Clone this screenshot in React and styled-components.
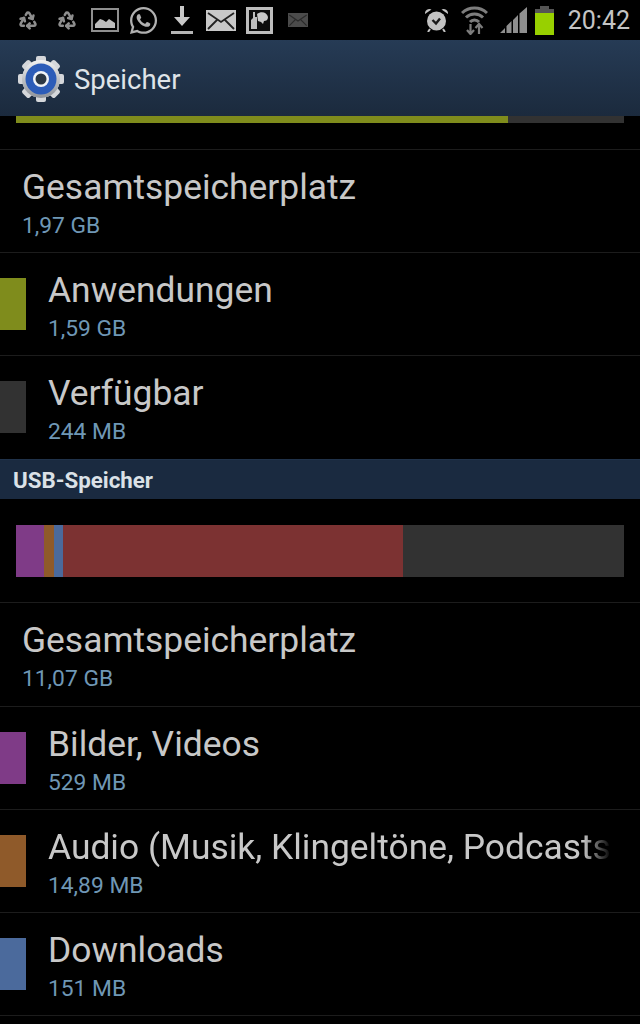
import React from "react";
import styled, { createGlobalStyle } from "styled-components";
import { Recycle } from "lucide-react";
import { FaWhatsapp } from "react-icons/fa";

const GlobalStyle = createGlobalStyle`
  html, body {
    margin: 0;
    padding: 0;
    background: #000;
  }
  body {
    font-family: Roboto, "Liberation Sans", sans-serif;
  }
`;

const Page = styled.div`
  width: 640px;
  height: 1024px;
  overflow: hidden;
  background: #000;
`;

const StatusBar = styled.div`
  height: 40px;
  display: flex;
  align-items: center;
  padding: 0 10px 0 9px;
  box-sizing: border-box;
`;

const Notifications = styled.div`
  display: flex;
  align-items: center;
  flex: 1;
`;

const SystemIcons = styled.div`
  display: flex;
  align-items: center;
`;

const IconSlot = styled.div`
  width: 38.5px;
  height: 40px;
  flex: none;
  display: flex;
  align-items: center;
  justify-content: center;
`;

const BatterySlot = styled.div`
  margin: 0 14px 0 2px;
  display: flex;
  align-items: center;
`;

const Clock = styled.span`
  font-size: 25px;
  color: #c4c4c4;
`;

const ActionBar = styled.div`
  height: 76px;
  display: flex;
  align-items: center;
  gap: 10px;
  padding-left: 18px;
  box-sizing: border-box;
  background: linear-gradient(#263b55, #1b2a3d);
`;

const ActionTitle = styled.span`
  font-size: 27.5px;
  color: #dfe4e8;
  padding-top: 3px;
`;

const Bar = styled.div`
  display: flex;
  margin: 0 16px;
  height: ${(p) => p.$height}px;
  background: #323232;
`;

const BarPart = styled.div`
  background: ${(p) => p.$color};
`;

const Row = styled.div`
  height: 102px;
  margin-bottom: ${(p) => (p.$tall ? 1 : 0)}px;
  border-top: 1px solid #1c1c1c;
  display: flex;
  align-items: center;
  overflow: hidden;
`;

const Swatch = styled.div`
  width: 26px;
  height: 52px;
  background: ${(p) => p.$color};
  flex: none;
`;

const RowText = styled.div`
  margin-left: 22px;
  padding-top: 4px;
  min-width: 0;
  white-space: nowrap;
`;

const RowTitle = styled.div`
  font-size: 35.4px;
  line-height: 46px;
  color: #c8c8c8;
  width: 563px;
  overflow: hidden;
  mask-image: ${(p) => (p.$fade ? "linear-gradient(to right, #000 95%, transparent 100%)" : "none")};
`;

const RowValue = styled.div`
  font-size: 22.8px;
  line-height: 32px;
  color: #6f97b5;
`;

const SectionHeader = styled.div`
  height: 40px;
  margin-top: 1px;
  display: flex;
  align-items: center;
  padding-left: 13px;
  background: #1a2a40;
  border-top: 1px solid #20324a;
  box-sizing: border-box;
  font-size: 22.3px;
  font-weight: 700;
  color: #dbe1e7;
`;

const BarSection = styled.div`
  padding: 26px 0 25px;
`;

const TopBarGap = styled.div`
  height: 26px;
`;

const internalRows = [
  { title: "Anwendungen", value: "1,59 GB", color: "#7f8c1c" },
  { title: "Verfügbar", value: "244 MB", color: "#323232" },
];

const usbRows = [
  { title: "Bilder, Videos", value: "529 MB", color: "#7f3b87" },
  { title: "Audio (Musik, Klingeltöne, Podcasts", value: "14,89 MB", color: "#8f5a2a", fade: true },
  { title: "Downloads", value: "151 MB", color: "#4b6a9c" },
];

const usbParts = [
  { width: 28, color: "#7f3b87" },
  { width: 10, color: "#8f5a2a" },
  { width: 9, color: "#4b6a9c" },
  { width: 340, color: "#7c3232" },
];

const Picture = () => (
  <svg width="28" height="24" viewBox="0 0 28 24">
    <rect x="1" y="1" width="26" height="22" fill="#000" stroke="#8f8f8f" strokeWidth="2" />
    <path d="M4 20v-4l5-5 3 1 3 2 3-3 6 4v5z" fill="#bdbdbd" />
  </svg>
);

const Download = () => (
  <svg width="22" height="28" viewBox="0 0 22 28">
    <path d="M9 0h4v11h6l-8 9-8-9h6z" fill="#c8c8c8" />
    <rect x="0" y="25" width="22" height="3" fill="#b5b5b5" />
  </svg>
);

const Mail = ({ dim }) => (
  <svg width={dim ? 22 : 30} height={dim ? 14 : 21} viewBox="0 0 30 21">
    <rect width="30" height="21" fill={dim ? "#4b4b4b" : "#c8c8c8"} />
    <path d="M2 3l13 9L28 3M2 19l9-9M28 19l-9-9" fill="none" stroke={dim ? "#2a2a2a" : "#222"} strokeWidth="1.800" />
  </svg>
);

const PhotoIcon = () => (
  <svg width="27" height="27" viewBox="0 0 27 27">
    <rect x="1.500" y="1.500" width="24" height="24" fill="#0c0c0c" stroke="#bdbdbd" strokeWidth="3" />
    <path d="M11 7c4-3 10-2 11 3 0 3-2 4-4 4l-1 3-2-2-3-1z" fill="#c8c8c8" />
    <path d="M7 5h2v5h2v12H5V13l2-2z" fill="#bdbdbd" />
  </svg>
);

const Alarm = () => (
  <svg width="23" height="24" viewBox="0 0 23 24">
    <circle cx="11.500" cy="13" r="9.500" fill="#c2c2c2" />
    <path d="M7.500 12l3.500 3.500 4-5" fill="none" stroke="#1a1a1a" strokeWidth="2.400" />
    <path d="M0 6a4.500 4.500 0 0 1 6.500-4.500zM23 6a4.500 4.500 0 0 0-6.500-4.500z" fill="#c2c2c2" />
    <path d="M5 21l-2 3M18 21l2 3" stroke="#c2c2c2" strokeWidth="2" />
  </svg>
);

const Wifi = () => (
  <svg width="27" height="29" viewBox="0 0 27 29" fill="none" stroke="#7d7d7d">
    <path d="M1 7a18 18 0 0 1 25 0" strokeWidth="3" />
    <path d="M5 11.500a12 12 0 0 1 17 0" strokeWidth="3" />
    <path d="M9 16a6 6 0 0 1 9 0" strokeWidth="3" />
    <path d="M9.500 18v10M6 24l3.500 4 3.500-4" strokeWidth="2.200" />
    <path d="M18 28V18M14.500 22l3.500-4 3.500 4" strokeWidth="2.200" />
  </svg>
);

const Signal = () => (
  <svg width="27" height="26" viewBox="0 0 27 26" fill="#8f8f8f">
    <path d="M0 26l5-5v5zM6.500 26v-7l5-5v12zM13 26V13l5-5v18zM19.500 26V6.500L27 0v26z" />
  </svg>
);

const Battery = () => (
  <svg width="19" height="29" viewBox="0 0 19 29">
    <rect x="5" y="0" width="9" height="3" fill="#555" />
    <rect x="0" y="3" width="19" height="4" fill="#555" />
    <rect x="0" y="7" width="19" height="22" fill="#98d000" />
  </svg>
);

const Gear = () => (
  <svg width="46" height="48" viewBox="0 0 46 48">
    <defs>
      <linearGradient id="gear" x1="0" y1="0" x2="0" y2="1">
        <stop offset="0" stopColor="#f2f2f2" />
        <stop offset="1" stopColor="#8d9299" />
      </linearGradient>
    </defs>
    <circle cx="23" cy="25" r="19" fill="#c9cccf" />
    {[0, 45, 90, 135, 180, 225, 270, 315].map((a) => (
      <rect key={a} x="18" y="2" width="10" height="9" rx="2" fill="#d5d7da" transform={`rotate(${a} 23 25)`} />
    ))}
    <circle cx="23" cy="25" r="19" fill="url(#gear)" />
    <circle cx="23" cy="25" r="15.500" fill="#2c5cb8" />
    <circle cx="23" cy="25" r="8" fill="#f0f3f7" />
    <circle cx="23" cy="25" r="5.500" fill="#2b3744" />
  </svg>
);

const StorageRow = ({ title, value, color, fade, tall }) => (
  <Row $tall={tall}>
    {color && <Swatch $color={color} />}
    <RowText>
      <RowTitle $fade={fade}>{title}</RowTitle>
      <RowValue>{value}</RowValue>
    </RowText>
  </Row>
);

export default function App() {
  return (
    <Page>
      <GlobalStyle />
      <StatusBar>
        <Notifications>
          <IconSlot><Recycle size={20} color="#8e8e8e" strokeWidth={3} /></IconSlot>
          <IconSlot><Recycle size={20} color="#8e8e8e" strokeWidth={3} /></IconSlot>
          <IconSlot><Picture /></IconSlot>
          <IconSlot><FaWhatsapp size={31} color="#b0b0b0" /></IconSlot>
          <IconSlot><Download /></IconSlot>
          <IconSlot><Mail /></IconSlot>
          <IconSlot><PhotoIcon /></IconSlot>
          <IconSlot><Mail dim /></IconSlot>
        </Notifications>
        <SystemIcons>
          <IconSlot><Alarm /></IconSlot>
          <IconSlot><Wifi /></IconSlot>
          <IconSlot><Signal /></IconSlot>
          <BatterySlot><Battery /></BatterySlot>
          <Clock>20:42</Clock>
        </SystemIcons>
      </StatusBar>
      <ActionBar>
        <Gear />
        <ActionTitle>Speicher</ActionTitle>
      </ActionBar>
      <Bar $height={7}>
        <BarPart $color="#7f8c1c" style={{ width: 492 }} />
      </Bar>
      <TopBarGap />
      <StorageRow title="Gesamtspeicherplatz" value="1,97 GB" />
      {internalRows.map((r) => (
        <StorageRow key={r.title} {...r} />
      ))}
      <SectionHeader>USB-Speicher</SectionHeader>
      <BarSection>
        <Bar $height={52}>
          {usbParts.map((p) => (
            <BarPart key={p.color} $color={p.color} style={{ width: p.width }} />
          ))}
        </Bar>
      </BarSection>
      <StorageRow title="Gesamtspeicherplatz" value="11,07 GB" tall />
      {usbRows.map((r) => (
        <StorageRow key={r.title} {...r} />
      ))}
      <Row />
    </Page>
  );
}
